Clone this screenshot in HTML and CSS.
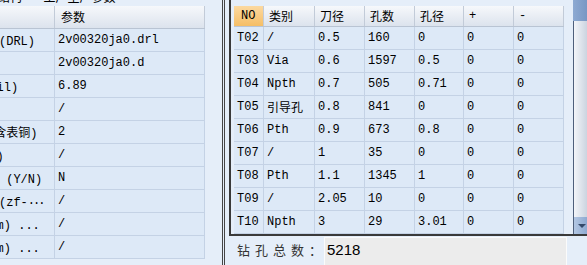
FILE: index.html
```html
<!DOCTYPE html>
<html lang="zh-CN">
<head>
    <meta charset="UTF-8">
    <title>钻孔参数</title>
    <link rel="stylesheet" href="styles.css">
</head>
<body>
    <div class="window">
        <!-- left: production parameters (scrolled sideways) -->
        <div class="left-pane">
            <div class="pane-title"><span>结构 — 工厂生产参数</span></div>
            <div class="prop-table">
                <div class="prop-row prop-head"><div class="cell">项目</div><div class="cell">参数</div></div>
                <div class="prop-row"><div class="cell">钻孔资料文件名称(DRL)</div><div class="cell">2v00320ja0.drl</div></div>
                <div class="prop-row"><div class="cell">钻孔资料名称</div><div class="cell">2v00320ja0.d</div></div>
                <div class="prop-row"><div class="cell">最小钻孔直径 (mil)</div><div class="cell">6.89</div></div>
                <div class="prop-row"><div class="cell">钻孔备注</div><div class="cell">/</div></div>
                <div class="prop-row"><div class="cell">成品板厚度范围(含表铜)</div><div class="cell">2</div></div>
                <div class="prop-row"><div class="cell">是否沉金&nbsp;&nbsp;(备注)</div><div class="cell">/</div></div>
                <div class="prop-row"><div class="cell">是否需要做背钻处 (Y/N)</div><div class="cell">N</div></div>
                <div class="prop-row"><div class="cell">表面处理工艺类型(zf-<span class="dots">...</span></div><div class="cell">/</div></div>
                <div class="prop-row"><div class="cell">外层最小线宽 (mm) ...</div><div class="cell">/</div></div>
                <div class="prop-row"><div class="cell">内层最小线宽 (mm) ...</div><div class="cell">/</div></div>
            </div>
        </div>

        <div class="splitter"></div>

        <!-- right: drill tool table -->
        <div class="right-pane">
            <div class="grid-box">
                <div class="grid-area">
                    <div class="grid-row grid-head">
                        <div class="cell no-col">NO</div>
                        <div class="cell">类别</div>
                        <div class="cell">刀径</div>
                        <div class="cell">孔数</div>
                        <div class="cell">孔径</div>
                        <div class="cell">+</div>
                        <div class="cell">-</div>
                    </div>
                    <div class="grid-row"><div class="cell">T02</div><div class="cell">/</div><div class="cell">0.5</div><div class="cell">160</div><div class="cell">0</div><div class="cell">0</div><div class="cell">0</div></div>
                    <div class="grid-row"><div class="cell">T03</div><div class="cell">Via</div><div class="cell">0.6</div><div class="cell">1597</div><div class="cell">0.5</div><div class="cell">0</div><div class="cell">0</div></div>
                    <div class="grid-row"><div class="cell">T04</div><div class="cell">Npth</div><div class="cell">0.7</div><div class="cell">505</div><div class="cell">0.71</div><div class="cell">0</div><div class="cell">0</div></div>
                    <div class="grid-row"><div class="cell">T05</div><div class="cell">引导孔</div><div class="cell">0.8</div><div class="cell">841</div><div class="cell">0</div><div class="cell">0</div><div class="cell">0</div></div>
                    <div class="grid-row"><div class="cell">T06</div><div class="cell">Pth</div><div class="cell">0.9</div><div class="cell">673</div><div class="cell">0.8</div><div class="cell">0</div><div class="cell">0</div></div>
                    <div class="grid-row"><div class="cell">T07</div><div class="cell">/</div><div class="cell">1</div><div class="cell">35</div><div class="cell">0</div><div class="cell">0</div><div class="cell">0</div></div>
                    <div class="grid-row"><div class="cell">T08</div><div class="cell">Pth</div><div class="cell">1.1</div><div class="cell">1345</div><div class="cell">1</div><div class="cell">0</div><div class="cell">0</div></div>
                    <div class="grid-row"><div class="cell">T09</div><div class="cell">/</div><div class="cell">2.05</div><div class="cell">10</div><div class="cell">0</div><div class="cell">0</div><div class="cell">0</div></div>
                    <div class="grid-row"><div class="cell">T10</div><div class="cell">Npth</div><div class="cell">3</div><div class="cell">29</div><div class="cell">3.01</div><div class="cell">0</div><div class="cell">0</div></div>
                </div>
                <div class="vscroll">
                    <div class="scroll-up"></div>
                    <div class="scroll-thumb"></div>
                    <div class="scroll-down"></div>
                </div>
            </div>
            <div class="total-bar">
                <span class="total-label">钻孔总数：</span>
                <div class="total-value">5218</div>
            </div>
        </div>
    </div>
</body>
</html>
```
FILE: styles.css
```css
body {
    margin: 0;
    font-family: "Liberation Mono", "Noto Sans CJK SC", monospace;
    font-size: 12px;
    color: #000;
    background-color: #e5eef9; /* pane background */
    overflow: hidden;
}

.window {
    display: flex;
    width: 587px;
    height: 265px;
    overflow: hidden;
}

/* left pane */
.left-pane {
    flex: none;
    width: 222px;
    overflow: hidden;
}

.pane-title {
    height: 6px;
    overflow: hidden;
}

.pane-title span {
    display: block;
    line-height: 14px;
    margin-top: -8px;
    margin-left: -2px;
    white-space: nowrap;
}

.prop-table {
    width: 305px;
    margin-left: -100px; /* scrolled to the right */
}

.prop-row {
    display: grid;
    grid-template-columns: 155px 150px;
    height: 23px;
    box-sizing: border-box;
    border-bottom: 1px solid #c4d2e5;
    background-color: #dde9f7;
}

.prop-head {
    background: linear-gradient(#f6f8fb, #dce3ed);
    border-bottom-color: #b9c4d3;
}

.cell {
    display: flex;
    align-items: center;
    box-sizing: border-box;
    padding-left: 3px;
    border-right: 1px solid #c4d2e5;
    white-space: nowrap;
    overflow: hidden;
}

.prop-head .cell {
    padding-left: 6px;
    border-right-color: #c2cbd8;
}

.dots {
    letter-spacing: -2px;
}

/* splitter between panes */
.splitter {
    flex: none;
    width: 7px;
    background: linear-gradient(to right, #454545 0 1px, #e5eef9 1px 2px, #454545 2px 3px, #e5eef9 3px);
}

/* right pane */
.right-pane {
    flex: none;
    width: 358px;
    display: flex;
    flex-direction: column;
    overflow: hidden;
}

.grid-box {
    flex: none;
    display: flex;
    width: 361px;
    height: 236px;
    box-sizing: border-box;
    border-left: 2px solid #3a3a3a;
    border-bottom: 2px solid #3a3a3a;
}

.grid-area {
    flex: none;
    width: 342px;
    box-sizing: border-box;
    padding: 6px 0 0 3px;
}

.grid-row {
    display: grid;
    grid-template-columns: 30px 51px 50px 50px 49px 50px 50px;
    width: 330px;
    height: 23px;
    box-sizing: border-box;
    border-bottom: 1px solid #c4d2e5;
    background-color: #dde9f7;
}

.grid-head {
    height: 21px;
    background: linear-gradient(#f6f8fb, #dce3ed);
    border-bottom-color: #b9c4d3;
}

.grid-head .cell {
    padding-left: 5px;
    border-right-color: #c2cbd8;
}

.grid-head .no-col {
    padding-left: 7px;
    background: linear-gradient(#fcd9a0, #f5be66);
}

/* vertical scrollbar */
.vscroll {
    flex: none;
    width: 17px;
    display: flex;
    flex-direction: column;
}

.scroll-up {
    height: 21px;
    background: linear-gradient(to right, #8eaad2, #7493c1);
}

.scroll-thumb {
    flex: 1;
    border-left: 1px solid #4e5f7b;
    background: linear-gradient(to right, #f3f5f9, #c2ccda);
}

.scroll-down {
    height: 17px;
    border-left: 1px solid #4e5f7b;
    background: linear-gradient(to right, #b3c7e3, #86a3cd);
    display: flex;
    justify-content: center;
    align-items: center;
}

.scroll-down::before {
    content: "";
    border-left: 4px solid transparent;
    border-right: 4px solid transparent;
    border-top: 4px solid #34496a;
}

/* total row */
.total-bar {
    display: flex;
    align-items: flex-start;
    padding: 1px 0 0 8px;
}

.total-label {
    flex: none;
    width: 87px;
    font-family: "Noto Sans CJK SC", sans-serif;
    font-size: 13px;
    letter-spacing: 5px;
    line-height: 26px;
    color: #333;
    white-space: nowrap;
}

.total-value {
    flex: none;
    width: 243px;
    height: 30px;
    box-sizing: border-box;
    padding-left: 2px;
    border: 1px solid #fbfbfb;
    background-color: #ececec;
    font-family: "Liberation Sans", sans-serif;
    font-size: 15px;
    line-height: 24px;
}
```
